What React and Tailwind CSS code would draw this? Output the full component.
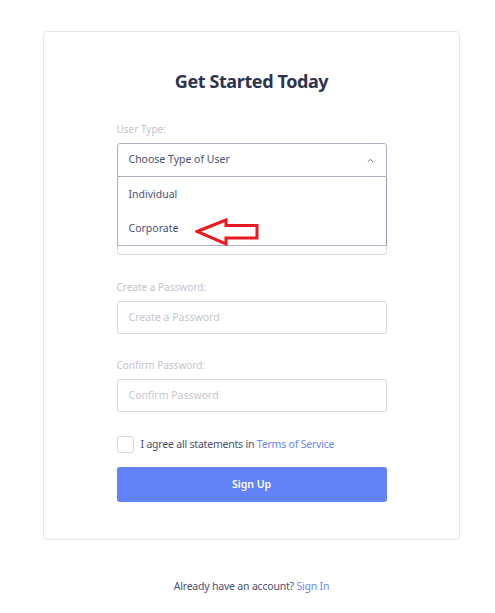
import React from "react";

const font = { fontFamily: '"Noto Sans", "Open Sans", Arial, sans-serif' };

function Field({ label, placeholder }) {
  return (
    <div className="flex flex-col">
      <div className="text-[10px] leading-[14px] text-[#c4c4cc] mb-[7px]">{label}</div>
      <div className="h-[33px] border border-[#d9d9e0] rounded-[3px] flex items-center pl-[11px] text-[10.5px] text-[#c6c6ce]">
        {placeholder}
      </div>
    </div>
  );
}

export default function App() {
  return (
    <div className="w-[495px] h-[613px] bg-white" style={font}>
      <div className="pt-[31px] pl-[43px]">
        <div className="w-[417px] h-[509px] border border-[#e6e6ea] rounded-[4px] pt-[37px] flex flex-col items-center">
          <h1 className="text-[18px] leading-[24px] font-bold text-[#2e3450] tracking-[-0.4px]">Get Started Today</h1>
          <div className="w-[270px] mt-[29px] flex flex-col">
            {/* User type */}
            <div className="relative flex flex-col">
              <div className="text-[10px] leading-[14px] text-[#c4c4cc] mb-[7px]">User Type:</div>
              <div className="h-[34px] border border-[#aeb0c2] rounded-t-[3px] flex items-center justify-between pl-[11px] pr-[12px] text-[10.5px] text-[#4b5070]">
                <span>Choose Type of User</span>
                <svg width="7" height="5" viewBox="0 0 7 5" fill="none">
                  <path d="M0.8 4L3.5 1.3L6.2 4" stroke="#5a5f7a" strokeWidth="0.9" />
                </svg>
              </div>
              {/* hidden field */}
              <div className="mt-[23px] flex flex-col">
                <div className="text-[10px] leading-[14px] text-[#c4c4cc] mb-[7px]">Email:</div>
                <div className="h-[34px] border border-[#d9d9e0] rounded-[3px]"></div>
              </div>
              {/* dropdown */}
              <div className="absolute left-0 right-0 top-[55px] h-[69px] bg-white border-x border-b border-[#aeb0c2] border-r-[#9c9fb4] flex flex-col text-[10.5px] text-[#4b5070] z-10">
                <div className="h-[34px] flex items-center pl-[11px] pt-[1px]">Individual</div>
                <div className="h-[34px] flex items-center pl-[11px] pt-[1px]">Corporate</div>
              </div>
              {/* annotation arrow */}
              <svg className="absolute left-[78px] top-[95px] z-20" width="64" height="30" viewBox="0 0 64 30" fill="none">
                <path d="M2 14.5 L31 3 L31 8.5 L62 8.5 L62 21 L31 21 L31 27 Z" stroke="#e81920" strokeWidth="3" strokeLinejoin="miter" />
              </svg>
            </div>
            <div className="mt-[25px]">
              <Field label="Create a Password:" placeholder="Create a Password" />
            </div>
            <div className="mt-[24px]">
              <Field label="Confirm Password:" placeholder="Confirm Password" />
            </div>
            <div className="mt-[24px] flex items-center h-[17px]">
              <div className="w-[17px] h-[17px] border border-[#d9d9e0] rounded-[3px]"></div>
              <span className="ml-[7px] text-[10.5px] text-[#4b5070] tracking-[-0.2px]">
                I agree all statements in <span className="text-[#6b86f5]">Terms of Service</span>
              </span>
            </div>
            <button className="mt-[14px] h-[35px] w-full bg-[#6282f8] rounded-[3px] text-white text-[10.5px] font-semibold">
              Sign Up
            </button>
          </div>
        </div>
      </div>
      <div className="w-[417px] ml-[43px] mt-[39px] text-center text-[10.5px] leading-[14px] text-[#4b5070] tracking-[-0.2px]">
        Already have an account? <span className="text-[#6b86f5]">Sign In</span>
      </div>
    </div>
  );
}
